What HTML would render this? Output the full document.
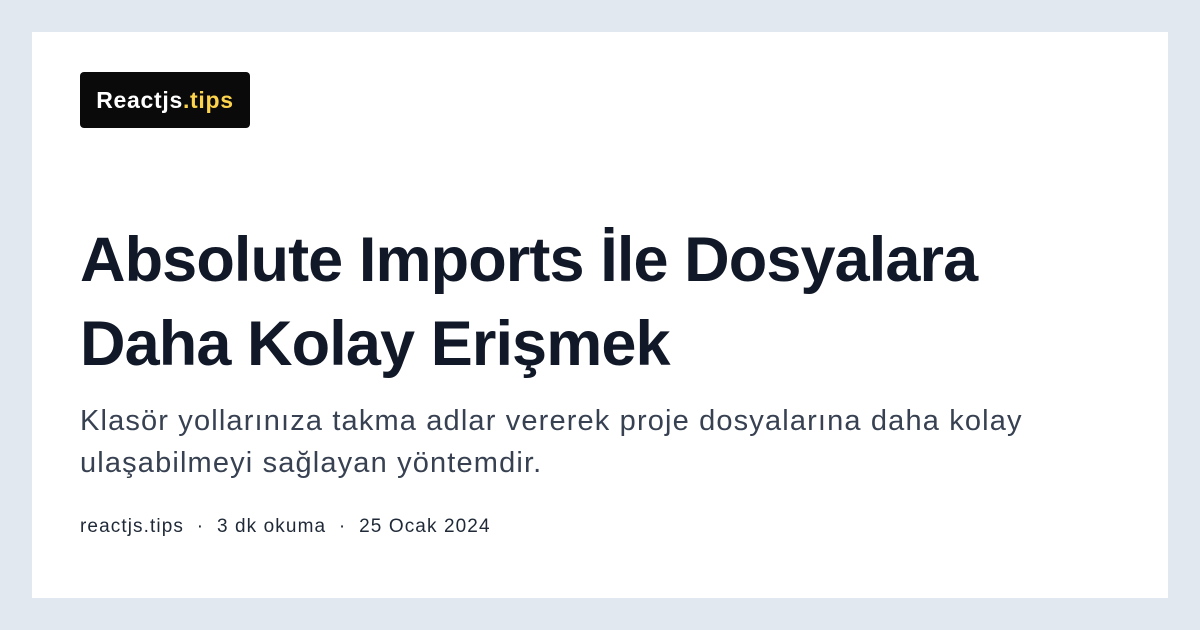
<!DOCTYPE html>
<html><head><meta charset="utf-8"><style>
*{margin:0;padding:0;box-sizing:border-box}
body{width:1200px;height:630px;background:#e2e8f0;font-family:"Liberation Sans",sans-serif;position:relative;overflow:hidden}
.card{position:absolute;left:32px;top:32px;width:1136px;height:566px;background:#fff}
.logo{position:absolute;left:48px;top:40px;width:170px;height:56px;background:#0a0a0a;border-radius:4px;color:#fff;font-weight:bold;font-size:23px;line-height:56px;text-align:center;letter-spacing:0.7px}
.logo span{color:#fcd34d}
h1{position:absolute;left:48px;top:186px;font-size:63px;line-height:84px;font-weight:bold;color:#111827;letter-spacing:-0.9px;width:1060px}
p{position:absolute;left:48px;top:368px;font-size:29px;line-height:42px;color:#374151;width:1080px;letter-spacing:1.15px}
.meta{position:absolute;left:48px;top:484px;font-size:19px;color:#1f2937;letter-spacing:1.1px}
</style></head><body>
<div class="card">
<div class="logo">Reactjs<span>.tips</span></div>
<h1>Absolute Imports İle Dosyalara<br>Daha Kolay Erişmek</h1>
<p>Klasör yollarınıza takma adlar vererek proje dosyalarına daha kolay<br>ulaşabilmeyi sağlayan yöntemdir.</p>
<div class="meta">reactjs.tips &nbsp;·&nbsp; 3 dk okuma &nbsp;·&nbsp; 25 Ocak 2024</div>
</div>
</body></html>
